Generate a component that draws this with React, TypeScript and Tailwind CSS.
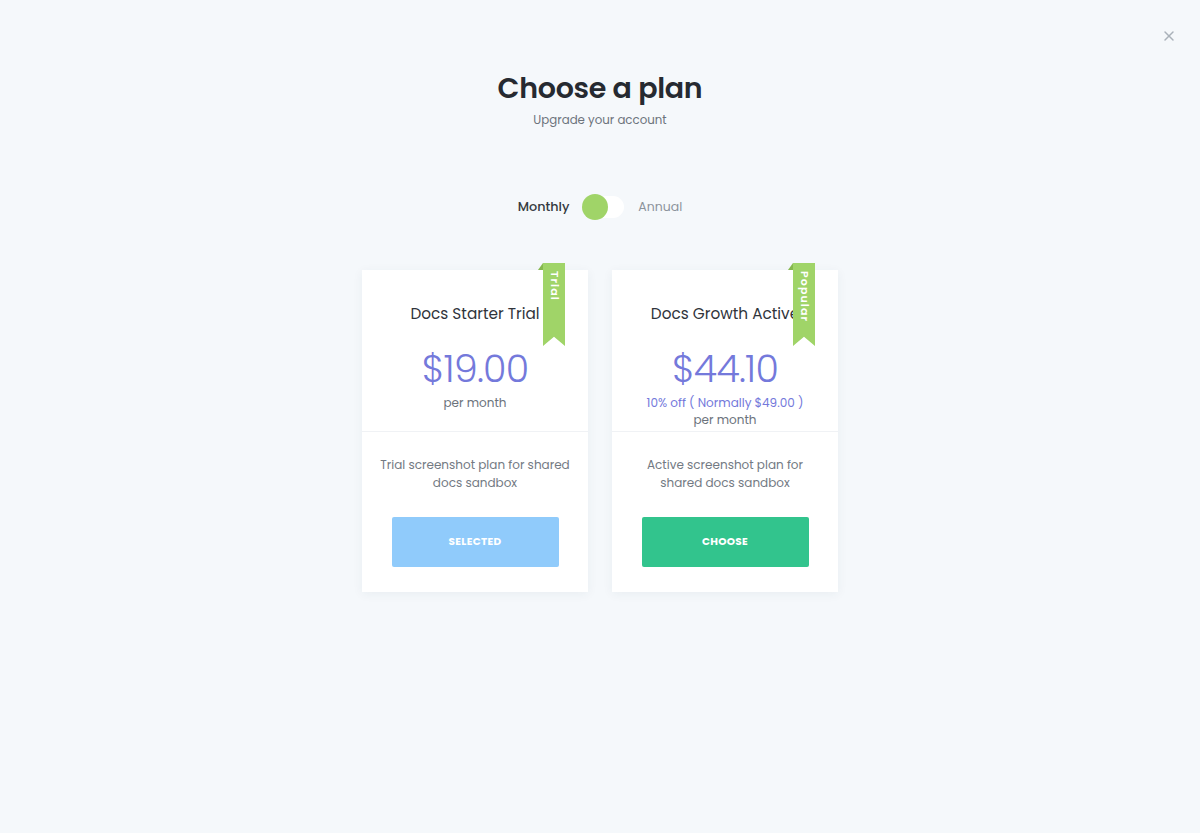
import { X } from 'lucide-react'

interface Plan {
  id: string
  name: string
  price: string
  discount?: string
  description: string
  ribbon: string
  selected: boolean
}

const plans: Plan[] = [
  {
    id: 'starter',
    name: 'Docs Starter Trial',
    price: '$19.00',
    description: 'Trial screenshot plan for shared docs sandbox',
    ribbon: 'Trial',
    selected: true,
  },
  {
    id: 'growth',
    name: 'Docs Growth Active',
    price: '$44.10',
    discount: '10% off ( Normally $49.00 )',
    description: 'Active screenshot plan for shared docs sandbox',
    ribbon: 'Popular',
    selected: false,
  },
]

function Ribbon({ label }: { label: string }) {
  return (
    <div className="absolute -top-[7px] right-[23px] z-10">
      {/* folded corner */}
      <svg className="absolute -left-[5px] top-0" width="5" height="7" viewBox="0 0 5 7">
        <polygon points="5,0 5,7 0,7" fill="#86b84e" />
      </svg>
      <div className="w-[22px] h-[83px] bg-[#a0d468] [clip-path:polygon(0_0,100%_0,100%_100%,50%_89%,0_100%)] flex justify-center pt-[8px]">
        <span className="[writing-mode:vertical-rl] text-[11px] font-semibold text-white tracking-[0.1em] leading-none">
          {label}
        </span>
      </div>
    </div>
  )
}

function PlanCard({ plan }: { plan: Plan }) {
  return (
    <div className="relative w-[226px] bg-white shadow-[0_2px_10px_rgba(40,60,90,0.06)]">
      <Ribbon label={plan.ribbon} />
      <div className="h-[162px] border-b border-[#f0f2f5] pt-[34px] flex flex-col items-center overflow-hidden">
        <h3 className="text-[15.3px] leading-5 text-[#30343b] whitespace-nowrap">{plan.name}</h3>
        <p className="mt-[20px] text-[38px] font-light leading-[50px] text-[#7479db] tracking-[-0.02em]">{plan.price}</p>
        {plan.discount && (
          <p className="text-[12px] leading-[17px] text-[#7479db]">{plan.discount}</p>
        )}
        <p className="text-[12px] leading-[17px] text-[#6c737c]">per month</p>
      </div>
      <div className="px-[18px] pt-[24px] pb-[25px] flex flex-col items-center">
        <p className="text-[12px] leading-[18px] text-[#737a83] text-center">{plan.description}</p>
        <button
          className={
            plan.selected
              ? 'mt-[25px] w-[167px] h-[50px] rounded-[2px] bg-[#90cbfb] text-white text-[10.5px] font-bold tracking-[0.03em] uppercase'
              : 'mt-[25px] w-[167px] h-[50px] rounded-[2px] bg-[#32c48d] text-white text-[10.5px] font-bold tracking-[0.03em] uppercase'
          }
        >
          {plan.selected ? 'Selected' : 'Choose'}
        </button>
      </div>
    </div>
  )
}

export default function App() {
  return (
    <div className="relative min-h-[833px] w-full bg-[#f5f8fb] font-['Poppins','Open_Sans',sans-serif]">
      <button className="absolute top-[28px] right-[23px] text-[#aab1ba]">
        <X className="w-[16px] h-[16px]" strokeWidth={2.2} />
      </button>

      <div className="pt-[68px] flex flex-col items-center">
        <h1 className="text-[28.5px] leading-[40px] font-semibold text-[#262a31] tracking-[-0.01em]">Choose a plan</h1>
        <p className="mt-[2px] text-[11.8px] leading-5 text-[#6c737c]">Upgrade your account</p>

        <div className="mt-[66px] flex items-center gap-[14px]">
          <span className="text-[12.8px] font-medium text-[#343a40]">Monthly</span>
          <div className="relative w-[41px] h-[22px] rounded-full bg-white">
            <div className="absolute -left-[1px] -top-[2px] w-[26px] h-[26px] rounded-full bg-[#a0d468]" />
          </div>
          <span className="text-[12.5px] text-[#8c939b]">Annual</span>
        </div>

        <div className="mt-[52px] flex gap-6">
          {plans.map(plan => (
            <PlanCard key={plan.id} plan={plan} />
          ))}
        </div>
      </div>
    </div>
  )
}
